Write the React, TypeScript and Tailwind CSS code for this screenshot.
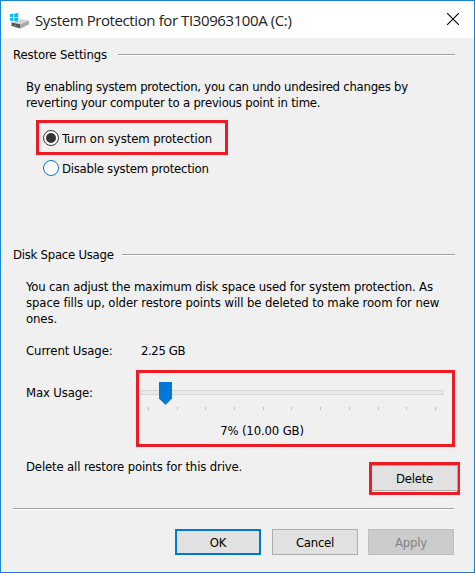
import { useState } from "react";
import type { ReactNode } from "react";

const TICKS = Array.from({ length: 11 }, (_, i) => i);

function DriveIcon() {
  return (
    <svg width="20" height="16" viewBox="0 0 20 16" className="mt-0.5 shrink-0">
      <path d="M1.5 9.5 10 6 19 7.6 10.5 11.2Z" fill="#d4d4d4" />
      <path d="M1.5 9.5 10.5 11.2V15.5L1.5 13Z" fill="#555555" />
      <path d="M10.5 11.2 19 7.6V11.4L10.5 15.5Z" fill="#a9a9a9" />
      <path d="M4 12.2 6 12.6" stroke="#58b947" />
      <path d="M0 0H9V8.8H0Z" fill="#fff" />
      <path
        d="M0 1.3 3.4.8V4.1H0ZM4.2.7 8.2 0V4.1H4.2ZM0 4.9H3.4V8.1L0 7.6ZM4.2 4.9H8.2V8.8L4.2 8.2Z"
        fill="#00bcf2"
      />
    </svg>
  );
}

function GroupHeader({ title, className }: { title: string; className: string }) {
  return (
    <div className="flex h-4 items-center pl-3 pr-[19px]">
      <h2 className={`shrink-0 whitespace-nowrap pt-0.5 ${className}`}>{title}</h2>
      <div className="mt-0.5 h-0.5 flex-1 border-t border-[#a0a0a0] bg-white" />
    </div>
  );
}

interface RadioProps {
  label: string;
  checked: boolean;
  onSelect: () => void;
}

function Radio({ label, checked, onSelect }: RadioProps) {
  return (
    <button
      type="button"
      role="radio"
      aria-checked={checked}
      onClick={onSelect}
      className="flex h-4 items-center gap-[3px] whitespace-nowrap"
    >
      <span
        className={`flex size-4 items-center justify-center rounded-full border bg-white ${
          checked ? "border-[#333333]" : "border-[#0078d7]"
        }`}
      >
        {checked && <span className="size-2.5 rounded-full bg-[#333333]" />}
      </span>
      <span className="pt-0.5">{label}</span>
    </button>
  );
}

function DialogButton({ children, className }: { children: ReactNode; className: string }) {
  return (
    <button
      type="button"
      className={`flex h-[26px] w-[86px] items-center justify-center pt-0.5 ${className}`}
    >
      {children}
    </button>
  );
}

export default function App() {
  const [enabled, setEnabled] = useState(true);

  return (
    <div className="flex h-[573px] w-[475px] flex-col border border-[#1883d7] bg-[#f0f0f0] font-['DejaVu_Sans_Condensed','DejaVu_Sans',sans-serif] text-[13px] leading-4 tracking-[-0.25px] text-black [font-stretch:condensed]">
      {/* Title bar */}
      <header className="flex h-[37px] shrink-0 items-center bg-white pl-[9px] pr-[15px]">
        <DriveIcon />
        <h1 className="ml-[5px] flex-1 whitespace-nowrap font-['Open_Sans',sans-serif] text-[15px] tracking-[-0.4px] text-[#222222] [font-stretch:normal]">
          System Protection for TI30963100A (C:)
        </h1>
        <button type="button" aria-label="Close" className="pb-px">
          <svg width="12" height="12" viewBox="0 0 12 12" fill="none">
            <path d="M0 0 12 12M12 0 0 12" stroke="#000" strokeWidth="1.1" />
          </svg>
        </button>
      </header>

      {/* Restore settings */}
      <section className="mt-2 h-[200px] shrink-0">
        <GroupHeader title="Restore Settings" className="w-[105px] tracking-[-0.12px]" />
        <p className="ml-[25px] mt-[17px] whitespace-nowrap">
          By enabling system protection, you can undo undesired changes by
          <br />
          <span className="tracking-[-0.21px]">
            reverting your computer to a previous point in time.
          </span>
        </p>
        <div className="ml-[35px] mt-[9px] flex h-[35px] w-[192px] items-start border-[3px] border-[#ed1c24] pl-1 pt-[7px] tracking-[-0.09px]">
          <Radio
            label="Turn on system protection"
            checked={enabled}
            onSelect={() => setEnabled(true)}
          />
        </div>
        <div className="ml-[42px] mt-[5px]">
          <Radio
            label="Disable system protection"
            checked={!enabled}
            onSelect={() => setEnabled(false)}
          />
        </div>
      </section>

      {/* Disk space usage */}
      <section className="shrink-0">
        <GroupHeader title="Disk Space Usage" className="w-[109px]" />
        <p className="ml-[25px] mt-[17px] whitespace-nowrap tracking-[-0.1px]">
          <span className="tracking-[-0.16px]">
            You can adjust the maximum disk space used for system protection. As
          </span>
          <br />
          space fills up, older restore points will be deleted to make room for new
          <br />
          ones.
        </p>
        <div className="ml-[25px] mt-4 flex whitespace-nowrap">
          <span className="w-[115px] tracking-[-0.1px]">Current Usage:</span>
          <span className="tracking-[-0.4px]">2.25 GB</span>
        </div>
        <div className="ml-[25px] mt-[11px] flex">
          <span className="mt-[15px] w-[110px] tracking-[-0.15px]">Max Usage:</span>
          <div className="h-[77px] w-[319px] border-[3px] border-[#ed1c24] pl-[2px] pt-[9px]">
            <div className="flex h-[23px] w-[302px] items-start pt-2">
              <div className="relative h-[5px] w-full border border-[#d6d6d6] bg-[#e7eaea]">
                <svg width="13" height="23" className="absolute -top-[9px] left-[17px]">
                  <path d="M0 0H13V16.5L6.5 23 0 16.5Z" fill="#0078d7" />
                </svg>
              </div>
            </div>
            <div className="ml-[7px] mt-0.5 flex h-1 w-[288px] justify-between">
              {TICKS.map((i) => (
                <span
                  key={i}
                  className={`w-px bg-[#c4c4c4] ${i === 0 || i === 10 ? "h-1" : "h-[3px]"}`}
                />
              ))}
            </div>
            <div className="mt-3 w-[242px] whitespace-nowrap text-center tracking-[-0.15px]">
              7% (10.00 GB)
            </div>
          </div>
        </div>
        <div className="ml-[25px] mt-3 flex whitespace-nowrap">
          <span className="w-[343px] tracking-[-0.15px]">
            Delete all restore points for this drive.
          </span>
          <div className="mt-[3px] h-[33px] w-[91px] border-[3px] border-[#ed1c24]">
            <DialogButton className="w-[84px] border border-l-0 border-[#adadad] bg-[#e1e1e1]">
              Delete
            </DialogButton>
          </div>
        </div>
      </section>

      {/* Footer */}
      <footer className="ml-3 mt-[13px] w-[441px] shrink-0">
        <div className="h-0.5 border-t border-[#a0a0a0] bg-white" />
        <div className="mt-[19px] flex justify-end gap-[10px]">
          <DialogButton className="mr-px border-2 border-[#0078d7] bg-[#e1e1e1]">OK</DialogButton>
          <DialogButton className="border border-[#adadad] bg-[#e1e1e1]">Cancel</DialogButton>
          <DialogButton className="border border-[#bfbfbf] bg-[#cccccc] text-[#838383]">
            Apply
          </DialogButton>
        </div>
      </footer>
    </div>
  );
}
